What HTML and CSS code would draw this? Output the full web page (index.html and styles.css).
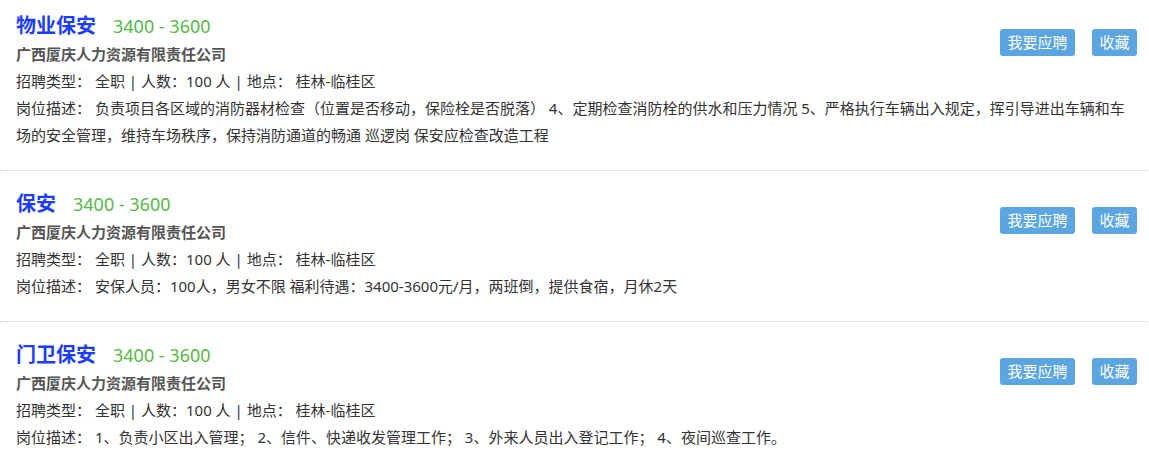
FILE: index.html
```html
<!DOCTYPE html>
<html lang="zh-CN">
<head>
<meta charset="utf-8">
<title>职位列表</title>
<link rel="stylesheet" href="styles.css">
</head>
<body>
<ul class="job-list">
  <li class="job">
    <div class="actions">
      <a class="btn">我要应聘</a>
      <a class="btn">收藏</a>
    </div>
    <div class="job-head"><span class="job-title">物业保安</span><span class="salary">3400 - 3600</span></div>
    <div class="company">广西厦庆人力资源有限责任公司</div>
    <div class="meta">招聘类型： 全职 | 人数：100 人 | 地点： 桂林-临桂区</div>
    <div class="desc">岗位描述： 负责项目各区域的消防器材检查（位置是否移动，保险栓是否脱落） 4、定期检查消防栓的供水和压力情况 5、严格执行车辆出入规定，挥引导进出车辆和车场的安全管理，维持车场秩序，保持消防通道的畅通 巡逻岗 保安应检查改造工程</div>
  </li>
  <li class="job">
    <div class="actions">
      <a class="btn">我要应聘</a>
      <a class="btn">收藏</a>
    </div>
    <div class="job-head"><span class="job-title">保安</span><span class="salary">3400 - 3600</span></div>
    <div class="company">广西厦庆人力资源有限责任公司</div>
    <div class="meta">招聘类型： 全职 | 人数：100 人 | 地点： 桂林-临桂区</div>
    <div class="desc">岗位描述： 安保人员：100人，男女不限 福利待遇：3400-3600元/月，两班倒，提供食宿，月休2天</div>
  </li>
  <li class="job">
    <div class="actions">
      <a class="btn">我要应聘</a>
      <a class="btn">收藏</a>
    </div>
    <div class="job-head"><span class="job-title">门卫保安</span><span class="salary">3400 - 3600</span></div>
    <div class="company">广西厦庆人力资源有限责任公司</div>
    <div class="meta">招聘类型： 全职 | 人数：100 人 | 地点： 桂林-临桂区</div>
    <div class="desc">岗位描述： 1、负责小区出入管理； 2、信件、快递收发管理工作； 3、外来人员出入登记工作； 4、夜间巡查工作。</div>
  </li>
</ul>
</body>
</html>
```
FILE: styles.css
```css
* { box-sizing: border-box; }
html, body {
  margin: 0;
  padding: 0;
  background: #fff;
}
body {
  font-family: "Noto Sans", "Noto Sans CJK SC", "Liberation Sans", sans-serif;
  font-size: 15px;
  color: #333;
}
.job-list {
  list-style: none;
  margin: 0;
  padding: 0;
  width: 1148px;
}
.job {
  padding: 17px 11px 21px 16px;
  border-bottom: 1px dotted #c8c8c8;
}
.job:first-child {
  padding-top: 10px;
}
.actions {
  float: right;
  margin-top: 19px;
  display: flex;
  gap: 17px;
}
.btn {
  display: block;
  height: 27px;
  line-height: 27px;
  padding: 0 7.5px;
  background: #5ba5e1;
  color: #fff;
  font-size: 15px;
  border-radius: 3px;
  cursor: pointer;
}
.job-head {
  height: 31px;
  line-height: 31px;
}
.job-title {
  font-size: 20px;
  font-weight: bold;
  color: #1d3dfb;
}
.salary {
  font-size: 18px;
  color: #55b847;
  margin-left: 17px;
}
.company {
  font-weight: bold;
  color: #555;
  line-height: 27px;
}
.meta, .desc {
  line-height: 27px;
  color: #333;
}
```
